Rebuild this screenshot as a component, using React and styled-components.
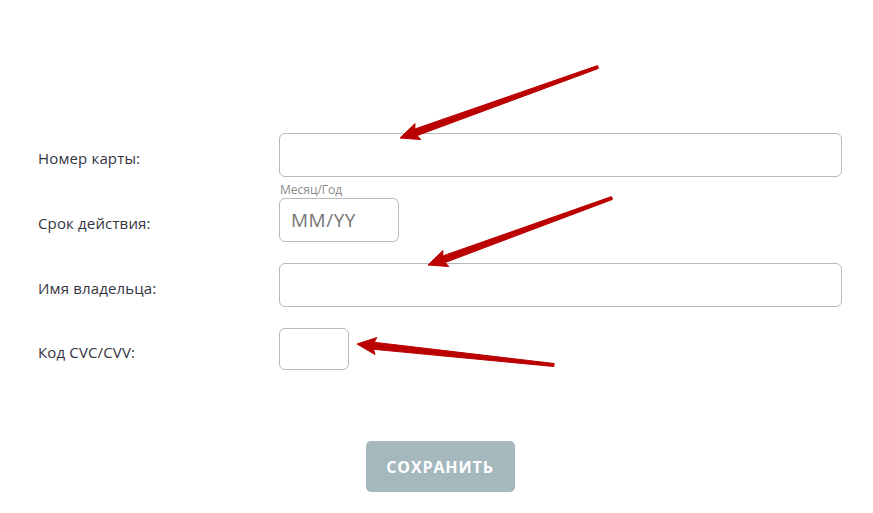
import React from 'react';
import styled, { createGlobalStyle } from 'styled-components';

const GlobalStyle = createGlobalStyle`
  html, body {
    margin: 0;
    padding: 0;
    background: #fff;
  }
  body {
    font-family: "Open Sans", "Liberation Sans", sans-serif;
  }
`;

const Page = styled.div`
  position: relative;
  width: 873px;
  height: 513px;
  overflow: hidden;
  background: #fff;
`;

const Form = styled.form`
  width: 804px;
  padding: 133px 0 0 38px;
  display: flex;
  flex-direction: column;
`;

const Rows = styled.div`
  display: flex;
  flex-direction: column;
  gap: 21px;
`;

const Row = styled.div`
  display: grid;
  grid-template-columns: 241px 1fr;
  align-items: center;
`;

const Label = styled.label`
  margin-top: 5px;
  font-size: 15px;
  color: #34343f;
  letter-spacing: 0.15px;
`;

const Field = styled.div`
  display: flex;
  flex-direction: column;
`;

const Caption = styled.span`
  height: 15px;
  margin-top: -15px;
  font-size: 12px;
  line-height: 13px;
  color: #8a8a8a;
  padding-left: 1px;
`;

const Input = styled.input`
  box-sizing: border-box;
  width: ${(p) => p.$width || '100%'};
  height: ${(p) => p.$height || 44}px;
  border: 1px solid #b9b9b9;
  border-radius: 6px;
  padding: 0 11px;
  font-family: "Open Sans", "Liberation Sans", sans-serif;
  font-size: 19px;
  color: #333;
  outline: none;
  &::placeholder {
    color: #767676;
    letter-spacing: 0.5px;
  }
`;

const Actions = styled.div`
  display: flex;
  justify-content: center;
  margin-top: 71px;
`;

const SaveButton = styled.button`
  width: 149px;
  height: 51px;
  border: none;
  border-radius: 5px;
  background: #a4b8be;
  color: #fff;
  font-family: "Open Sans", "Liberation Sans", sans-serif;
  font-weight: 700;
  font-size: 16px;
  letter-spacing: 0.9px;
`;

const Overlay = styled.svg`
  position: absolute;
  inset: 0;
  pointer-events: none;
`;

function arrowPoints([tx, ty], [hx, hy], tailW, shaftW, headLen, headW) {
  const dx = hx - tx;
  const dy = hy - ty;
  const len = Math.hypot(dx, dy);
  const ux = dx / len;
  const uy = dy / len;
  const nx = -uy;
  const ny = ux;
  const bx = hx - ux * headLen;
  const by = hy - uy * headLen;
  const pts = [
    [tx + nx * tailW / 2, ty + ny * tailW / 2],
    [bx + nx * shaftW / 2, by + ny * shaftW / 2],
    [bx + nx * headW / 2 - ux * 2, by + ny * headW / 2 - uy * 2],
    [hx, hy],
    [bx - nx * headW / 2 - ux * 2, by - ny * headW / 2 - uy * 2],
    [bx - nx * shaftW / 2, by - ny * shaftW / 2],
    [tx - nx * tailW / 2, ty - ny * tailW / 2],
  ];
  return pts.map((p) => p.map((v) => v.toFixed(1)).join(',')).join(' ');
}

const arrows = [
  { tail: [598, 67], tip: [400, 138] },
  { tail: [612, 198], tip: [428, 265] },
  { tail: [554, 365], tip: [357, 344] },
];

export default function App() {
  return (
    <Page>
      <GlobalStyle />
      <Form onSubmit={(e) => e.preventDefault()}>
        <Rows>
          <Row>
            <Label>Номер карты:</Label>
            <Input />
          </Row>
          <Row>
            <Label>Срок действия:</Label>
            <Field>
              <Caption>Месяц/Год</Caption>
              <Input $width="120px" placeholder="MM/YY" />
            </Field>
          </Row>
          <Row>
            <Label>Имя владельца:</Label>
            <Input />
          </Row>
          <Row>
            <Label>Код CVC/CVV:</Label>
            <Input $width="70px" $height={42} />
          </Row>
        </Rows>
        <Actions>
          <SaveButton type="submit">СОХРАНИТЬ</SaveButton>
        </Actions>
      </Form>
      <Overlay width="873" height="513" viewBox="0 0 873 513">
        {arrows.map((a, i) => (
          <polygon
            key={i}
            points={arrowPoints(a.tail, a.tip, 3, 7, 17, 17)}
            fill="#bb0000"
            stroke="#bb0000"
            strokeWidth="1"
            strokeLinejoin="round"
          />
        ))}
      </Overlay>
    </Page>
  );
}
